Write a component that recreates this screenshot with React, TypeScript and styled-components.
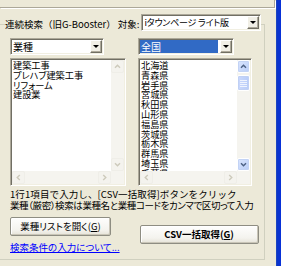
import React from "react";
import styled, { createGlobalStyle, css } from "styled-components";

const Global = createGlobalStyle`
  html, body { margin: 0; padding: 0; background: #ece9d8; }
  body {
    font-family: "Noto Sans CJK JP", "Noto Sans", sans-serif;
    font-size: 9.5px;
    color: #000;
    overflow: hidden;
  }
  * { box-sizing: border-box; }
`;

const Page = styled.div`
  display: flex;
  width: 281px;
  height: 266px;
  overflow: hidden;
`;

const Content = styled.div`
  width: 276px;
  display: flex;
  flex-direction: column;
`;

const TopStrip = styled.div`
  flex: none;
  width: 275px;
  height: 8px;
  border-right: 1px solid #aca899;
  border-bottom: 1px solid #aca899;
  box-shadow: 1px 1px 0 #fff;
`;

const WindowEdge = styled.div`
  flex: none;
  width: 5px;
  background: linear-gradient(to right, #1c44c0 0, #1c44c0 1px, #0a35c9 1px, #0831d9 100%);
`;

const Group = styled.fieldset`
  margin: 6px 0 0 -4px;
  width: 269px;
  height: 246px;
  padding: 3px 0 0 8px;
  border: 1px solid #d0d0bf;
  min-width: 0;
`;

const Legend = styled.legend`
  padding: 0;
  margin: 0;
`;

const LegendRow = styled.div`
  display: flex;
  align-items: flex-start;
  height: 21px;
`;

const LegendText = styled.span`
  line-height: 21px;
  white-space: nowrap;
  font-size: 9.5px;
`;

const Inner = styled.div`
  padding-left: 5px;
  display: flex;
  flex-direction: column;
`;

const Columns = styled.div`
  display: flex;
  gap: 12px;
`;

const Column = styled.div<{ $w: number }>`
  width: ${(p) => p.$w}px;
  display: flex;
  flex-direction: column;
  gap: 3px;
`;

const Combo = styled.div<{ $w: number; $ml?: number }>`
  width: ${(p) => p.$w}px;
  height: 17px;
  flex: none;
  margin-left: ${(p) => p.$ml ?? 0}px;
  display: flex;
  align-items: stretch;
  background: #fff;
  border: 1px solid;
  border-color: #aca899 #fff #fff #aca899;
  box-shadow: inset 1px 1px 0 #716f64, inset -1px -1px 0 #f1efe2;
  padding: 1px;
`;

const ComboText = styled.div<{ $sel?: boolean; $compact?: boolean }>`
  flex: 1;
  font-size: 10px;
  line-height: 13px;
  padding-left: 1px;
  margin-right: 2px;
  white-space: pre;
  overflow: hidden;
  ${(p) =>
    p.$compact &&
    css`
      font-feature-settings: "palt";
      font-size: 9px;
      letter-spacing: -0.2px;
      padding-left: 2px;
    `}
  ${(p) =>
    p.$sel &&
    css`
      background: #316ac5;
      color: #fff;
    `}
`;

const DropButton = styled.div`
  width: 12px;
  flex: none;
  background: #f1efe6;
  border: 1px solid;
  border-color: #fff #716f64 #716f64 #fff;
  box-shadow: inset -1px -1px 0 #aca899;
  display: flex;
  align-items: center;
  justify-content: center;
`;

const Tri = styled.span`
  width: 0;
  height: 0;
  border-left: 3px solid transparent;
  border-right: 3px solid transparent;
  border-top: 3px solid #000;
`;

const ListBox = styled.div`
  height: 128px;
  display: grid;
  grid-template-columns: 1fr 13px;
  grid-template-rows: 1fr 13px;
  background: #fff;
  border: 1px solid;
  border-color: #aca899 #fff #fff #aca899;
  box-shadow: inset 1px 1px 0 #716f64, inset -1px -1px 0 #f1efe2;
  padding: 1px;
`;

const Items = styled.div`
  overflow: hidden;
  padding: 1px 1px 0;
  font-feature-settings: "palt";
  font-size: 9.2px;
  line-height: 9.8px;
`;

const Item = styled.div`
  white-space: nowrap;
`;

const VScroll = styled.div`
  display: flex;
  flex-direction: column;
  background: #f5f4ef;
`;

const HScroll = styled.div`
  display: flex;
  background: #f5f4ef;
`;

const Corner = styled.div`
  background: #f5f4ef;
`;

const ArrowBtn = styled.div<{ $active?: boolean }>`
  width: 13px;
  height: 13px;
  flex: none;
  display: flex;
  align-items: center;
  justify-content: center;
  border-radius: 2px;
  ${(p) =>
    p.$active
      ? css`
          background: linear-gradient(135deg, #dbe6fe, #b9cdf7);
          border: 1px solid #fff;
          box-shadow: inset 0 0 0 1px #c3d3f5;
        `
      : css`
          background: #f4f3ee;
          border: 1px solid #efeee8;
        `}
`;

const Track = styled.div`
  flex: 1;
  display: flex;
  flex-direction: column;
  padding-top: 2px;
`;

const Thumb = styled.div`
  height: 16px;
  border-radius: 2px;
  background: linear-gradient(to right, #cad8fc, #b8ccf8);
  border: 1px solid #fff;
  box-shadow: inset 0 0 0 1px #c0d0f4;
  display: flex;
  align-items: center;
  justify-content: center;
`;

const Help = styled.div`
  margin-top: 3px;
  font-size: 9.5px;
  line-height: 11px;
`;

const HelpLine = styled.div<{ $tight?: boolean }>`
  white-space: nowrap;
  letter-spacing: 0.1px;
  ${(p) =>
    p.$tight &&
    css`
      font-feature-settings: "palt";
      letter-spacing: -0.4px;
    `}
`;

const BottomRow = styled.div`
  display: flex;
  margin-top: 6px;
`;

const LeftStack = styled.div`
  display: flex;
  flex-direction: column;
  gap: 6px;
`;

const Button = styled.button<{ $w: number; $bold?: boolean; $ml?: number; $mt?: number }>`
  width: ${(p) => p.$w}px;
  height: 19px;
  margin: ${(p) => p.$mt ?? 0}px 0 0 ${(p) => p.$ml ?? 0}px;
  padding: 0;
  border: 1px solid #8e8d82;
  border-radius: 2px;
  background: linear-gradient(#fefefd, #f4f3ee 70%, #e6e3d8);
  box-shadow: inset -1px -1px 0 #c9c5b7, inset 1px 1px 0 #fff;
  font-family: "Noto Sans CJK JP", "Noto Sans", sans-serif;
  font-size: 9.5px;
  line-height: 17px;
  color: #000;
  font-feature-settings: "palt";
  font-weight: ${(p) => (p.$bold ? 700 : 400)};
  white-space: nowrap;
`;

const Link = styled.a`
  color: #0000ff;
  text-decoration: underline;
  font-feature-settings: "palt";
  font-size: 9.5px;
  line-height: 11px;
  white-space: nowrap;
`;

const Chevron = ({ dir, color }: { dir: "up" | "down" | "left" | "right"; color: string }) => {
  const rot = { up: 0, right: 90, down: 180, left: 270 }[dir];
  return (
    <svg width="7" height="7" viewBox="0 0 7 7">
      <path
        d="M1 4.8 L3.5 2.2 L6 4.8"
        fill="none"
        stroke={color}
        strokeWidth="1.4"
        transform={`rotate(${rot} 3.5 3.5)`}
      />
    </svg>
  );
};

const Grip = () => (
  <svg width="7" height="7" viewBox="0 0 7 7">
    {[0.5, 2.5, 4.5, 6.5].map((y) => (
      <line key={y} x1="0" x2="7" y1={y} y2={y} stroke="#eef3fe" strokeWidth="1" />
    ))}
  </svg>
);

const DIS = "#cdcabb";
const ACT = "#4d6185";

const Scrolls = ({ active }: { active?: boolean }) => (
  <>
    <VScroll>
      <ArrowBtn $active={active}>
        <Chevron dir="up" color={active ? ACT : DIS} />
      </ArrowBtn>
      <Track>{active && <Thumb><Grip /></Thumb>}</Track>
      <ArrowBtn $active={active}>
        <Chevron dir="down" color={active ? ACT : DIS} />
      </ArrowBtn>
    </VScroll>
    <HScroll>
      <ArrowBtn>
        <Chevron dir="left" color={DIS} />
      </ArrowBtn>
      <Track />
      <ArrowBtn>
        <Chevron dir="right" color={DIS} />
      </ArrowBtn>
    </HScroll>
    <Corner />
  </>
);

const industries = ["建築工事", "プレハブ建築工事", "リフォーム", "建設業"];
const prefs = [
  "北海道",
  "青森県",
  "岩手県",
  "宮城県",
  "秋田県",
  "山形県",
  "福島県",
  "茨城県",
  "栃木県",
  "群馬県",
  "埼玉県",
  "千葉県",
];

export default function App() {
  return (
    <>
      <Global />
      <Page>
        <Content>
          <TopStrip />
          <Group>
            <Legend>
              <LegendRow>
                <LegendText>連続検索（旧G-Booster） 対象:</LegendText>
                <Combo $w={120} $ml={1}>
                  <ComboText $compact>iタウンページ ライト版</ComboText>
                  <DropButton>
                    <Tri />
                  </DropButton>
                </Combo>
              </LegendRow>
            </Legend>
            <Inner>
              <Columns>
                <Column $w={116}>
                  <Combo $w={94}>
                    <ComboText>業種</ComboText>
                    <DropButton>
                      <Tri />
                    </DropButton>
                  </Combo>
                  <ListBox>
                    <Items>
                      {industries.map((t) => (
                        <Item key={t}>{t}</Item>
                      ))}
                    </Items>
                    <Scrolls />
                  </ListBox>
                </Column>
                <Column $w={114}>
                  <Combo $w={96}>
                    <ComboText $sel>全国</ComboText>
                    <DropButton>
                      <Tri />
                    </DropButton>
                  </Combo>
                  <ListBox>
                    <Items>
                      {prefs.map((t) => (
                        <Item key={t}>{t}</Item>
                      ))}
                    </Items>
                    <Scrolls active />
                  </ListBox>
                </Column>
              </Columns>
              <Help>
                <HelpLine>1行1項目で入力し、[CSV一括取得]ボタンをクリック</HelpLine>
                <HelpLine $tight>業種（厳密）検索は業種名と業種コードをカンマで区切って入力</HelpLine>
              </Help>
              <BottomRow>
                <LeftStack>
                  <Button $w={101}>
                    業種リストを開く(<u>G</u>)
                  </Button>
                  <Link href="#">検索条件の入力について...</Link>
                </LeftStack>
                <Button $w={119} $bold $ml={20} $mt={8}>
                  CSV一括取得(<u>G</u>)
                </Button>
              </BottomRow>
            </Inner>
          </Group>
        </Content>
        <WindowEdge />
      </Page>
    </>
  );
}
